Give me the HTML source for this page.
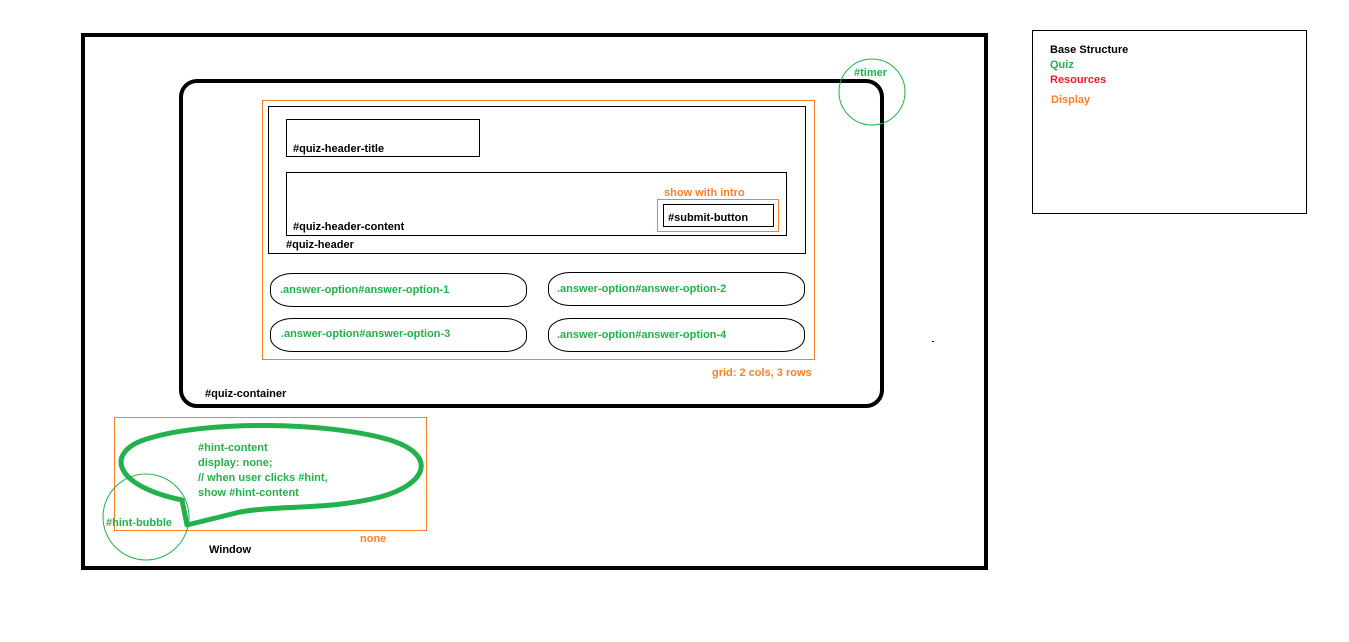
<!DOCTYPE html>
<html><head><style>body{margin:0;background:#fff}svg{display:block}text{font-family:"Liberation Sans",sans-serif;font-weight:bold;font-size:11px}</style></head><body>
<svg width="1349" height="642" viewBox="0 0 1349 642">
<rect x="83" y="35" width="903" height="533" fill="none" stroke="#000" stroke-width="4"/>
<rect x="181" y="81" width="701" height="325" rx="16" fill="none" stroke="#000" stroke-width="4"/>
<rect x="262.5" y="100.5" width="552" height="259" fill="none" stroke="#ff7f27"/>
<rect x="268.5" y="106.5" width="537" height="147" fill="none" stroke="#000"/>
<rect x="286.5" y="119.5" width="193" height="37" fill="none" stroke="#000"/>
<rect x="286.5" y="172.5" width="500" height="63" fill="none" stroke="#000"/>
<rect x="657.5" y="199.5" width="121" height="32" fill="none" stroke="#ff7f27"/>
<rect x="663.5" y="204.5" width="110" height="22" fill="none" stroke="#000"/>
<text x="293" y="152">#quiz-header-title</text>
<text x="293" y="230">#quiz-header-content</text>
<text x="286" y="248">#quiz-header</text>
<text x="664" y="196" fill="#ff7f27">show with intro</text>
<text x="668" y="221">#submit-button</text>
<g fill="none" stroke="#000">
<rect x="270.5" y="273.5" width="256" height="33" rx="22" ry="14"/>
<rect x="548.5" y="272.5" width="256" height="33" rx="22" ry="14"/>
<rect x="270.5" y="318.5" width="256" height="33" rx="22" ry="14"/>
<rect x="548.5" y="318.5" width="256" height="33" rx="22" ry="14"/>
</g>
<g fill="#22b14c">
<text x="280" y="293">.answer-option#answer-option-1</text>
<text x="557" y="292">.answer-option#answer-option-2</text>
<text x="281" y="337">.answer-option#answer-option-3</text>
<text x="557" y="338">.answer-option#answer-option-4</text>
<text x="854" y="76">#timer</text>
</g>
<circle cx="872" cy="92" r="33" fill="none" stroke="#22b14c"/>
<text x="712" y="376" fill="#ff7f27">grid: 2 cols, 3 rows</text>
<text x="205" y="397">#quiz-container</text>
<rect x="932" y="341" width="2" height="1" fill="#000"/>
<rect x="114.5" y="417.5" width="312" height="113" fill="none" stroke="#ff7f27"/>
<path d="M182,500 C110,485 105,450 150,438 C210,420 330,422 390,440 C440,456 425,485 380,497 C330,510 280,505 240,512 L187,525 Z" fill="none" stroke="#22b14c" stroke-width="5" stroke-linejoin="round"/>
<circle cx="146" cy="517" r="43" fill="none" stroke="#22b14c"/>
<g fill="#22b14c">
<text x="198" y="451">#hint-content</text>
<text x="198" y="466">display: none;</text>
<text x="198" y="481">// when user clicks #hint,</text>
<text x="198" y="496">show #hint-content</text>
<text x="106" y="526">#hint-bubble</text>
</g>
<text x="360" y="542" fill="#ff7f27">none</text>
<text x="209" y="553">Window</text>
<rect x="1032.5" y="30.5" width="274" height="183" fill="none" stroke="#000"/>
<text x="1050" y="53">Base Structure</text>
<text x="1050" y="68" fill="#22b14c">Quiz</text>
<text x="1050" y="83" fill="#ed1c24">Resources</text>
<text x="1051" y="103" fill="#ff7f27">Display</text>
</svg>
</body></html>
